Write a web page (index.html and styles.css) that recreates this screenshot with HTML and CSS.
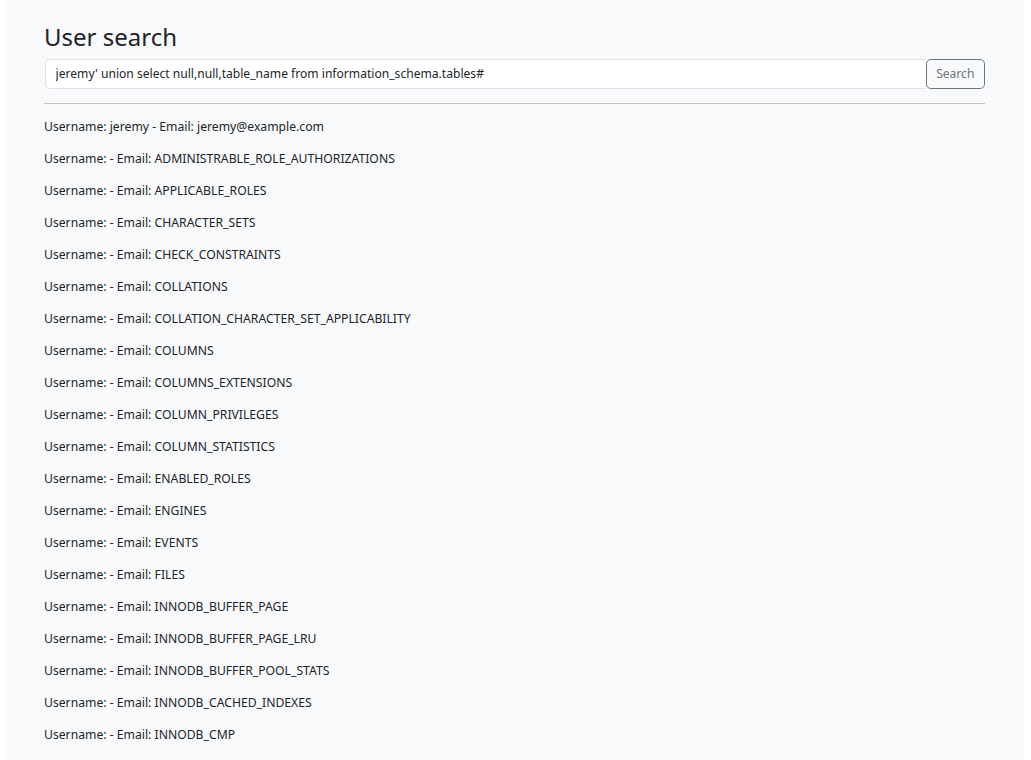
FILE: index.html
```html
<!DOCTYPE html>
<html>
<head>
<meta charset="utf-8">
<title>User search</title>
<link rel="stylesheet" href="styles.css">
</head>
<body>
<div class="page">
  <h2 class="title">User search</h2>
  <form class="search">
    <input class="search-input" type="text" value="jeremy' union select null,null,table_name from information_schema.tables#">
    <button class="search-btn" type="button">Search</button>
  </form>
  <hr class="divider">
  <div class="results">
    <p>Username: jeremy - Email: jeremy@example.com</p>
    <p>Username: - Email: ADMINISTRABLE_ROLE_AUTHORIZATIONS</p>
    <p>Username: - Email: APPLICABLE_ROLES</p>
    <p>Username: - Email: CHARACTER_SETS</p>
    <p>Username: - Email: CHECK_CONSTRAINTS</p>
    <p>Username: - Email: COLLATIONS</p>
    <p>Username: - Email: COLLATION_CHARACTER_SET_APPLICABILITY</p>
    <p>Username: - Email: COLUMNS</p>
    <p>Username: - Email: COLUMNS_EXTENSIONS</p>
    <p>Username: - Email: COLUMN_PRIVILEGES</p>
    <p>Username: - Email: COLUMN_STATISTICS</p>
    <p>Username: - Email: ENABLED_ROLES</p>
    <p>Username: - Email: ENGINES</p>
    <p>Username: - Email: EVENTS</p>
    <p>Username: - Email: FILES</p>
    <p>Username: - Email: INNODB_BUFFER_PAGE</p>
    <p>Username: - Email: INNODB_BUFFER_PAGE_LRU</p>
    <p>Username: - Email: INNODB_BUFFER_POOL_STATS</p>
    <p>Username: - Email: INNODB_CACHED_INDEXES</p>
    <p>Username: - Email: INNODB_CMP</p>
  </div>
</div>
</body>
</html>
```
FILE: styles.css
```css
html, body {
  margin: 0;
  padding: 0;
  background: #ffffff;
  height: 100%;
  overflow: hidden;
}
body {
  font-family: "Noto Sans", "Open Sans", sans-serif;
  font-size: 12.2px;
  line-height: 19.2px;
  color: #212529;
}
.page {
  margin: 0 7px 0 6px;
  padding: 22px 39px 0 38px;
  background: #f8f9fa;
  min-height: 100%;
  box-sizing: border-box;
}
.title {
  margin: 0 0 6px 0;
  font-size: 24px;
  font-weight: 400;
  line-height: 30.7px;
}
.search {
  display: flex;
  margin: 0;
}
.search-input {
  flex: 1;
  min-width: 0;
  font-family: inherit;
  font-size: 12.1px;
  line-height: 19.2px;
  color: #212529;
  background: #fff;
  border: 1px solid #dee2e6;
  border-right: 0;
  border-radius: 4.8px 0 0 4.8px;
  padding: 4.4px 9.6px;
  margin: 0 0 0 1px;
  outline: none;
}
.search-btn {
  font-family: inherit;
  font-size: 12.1px;
  line-height: 19.2px;
  color: #6c757d;
  background: transparent;
  border: 1px solid #6c757d;
  border-radius: 4.8px;
  padding: 4.4px 9.6px;
  margin: 0;
}
.divider {
  margin: 14.4px 0 12.8px 0;
  border: 0;
  border-top: 1px solid #c4c5c6;
}
.results p {
  margin: 0 0 12.8px 0;
}
```
